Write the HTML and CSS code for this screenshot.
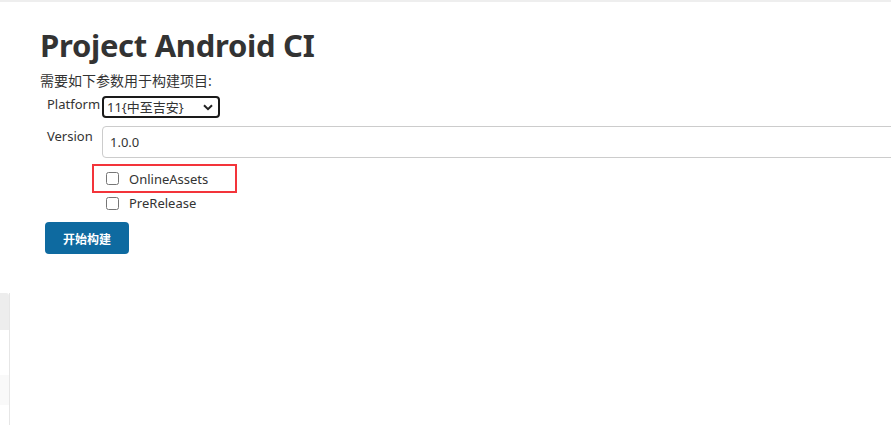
FILE: index.html
```html
<!DOCTYPE html>
<html lang="zh">
<head>
<meta charset="utf-8">
<title>Project Android CI</title>
<link rel="stylesheet" href="styles.css">
</head>
<body>
<div class="topbar"></div>
<main class="page">
  <h1 class="title">Project Android CI</h1>
  <p class="intro">需要如下参数用于构建项目:</p>
  <form class="params">
    <label class="plabel plabel-mid">Platform</label>
    <div class="field field-select">
      <div class="select-wrap">
        <select class="select">
          <option>11{中至吉安}</option>
        </select>
        <svg class="chev" width="10" height="7" viewBox="0 0 10 7"><path d="M1 1.2 L5 5.2 L9 1.2" fill="none" stroke="#222" stroke-width="2"/></svg>
      </div>
    </div>
    <label class="plabel plabel-top">Version</label>
    <div class="field field-text">
      <input class="text" type="text" value="1.0.0">
    </div>
    <div></div>
    <div class="field field-check1">
      <label class="check check-marked"><input type="checkbox"><span>OnlineAssets</span></label>
    </div>
    <div></div>
    <div class="field">
      <label class="check check-plain"><input type="checkbox"><span>PreRelease</span></label>
    </div>
  </form>
  <button class="build" type="button">开始构建</button>
</main>
<div class="sidebar">
  <div class="side-head"></div>
  <div class="side-gap"></div>
  <div class="side-item"></div>
</div>
</body>
</html>
```
FILE: styles.css
```css
html, body {
  margin: 0;
  padding: 0;
  background: #fff;
  overflow: hidden;
}
body {
  font-family: "Noto Sans", "Noto Sans CJK SC", sans-serif;
  color: #333;
  font-size: 13px;
}
.topbar {
  height: 2px;
  background: #eeeeee;
}
.page {
  padding-left: 40px;
}
.title {
  margin: 24px 0 0;
  font-size: 31px;
  line-height: 38px;
  font-weight: 700;
  color: #333;
  letter-spacing: -0.3px;
}
.intro {
  margin: 8px 0 0;
  font-size: 14px;
  line-height: 18px;
  color: #333;
}
.params {
  display: grid;
  grid-template-columns: 55px 1fr;
  padding-left: 7px;
  margin-top: 0;
  row-gap: 0;
}
.plabel {
  font-size: 13px;
  color: #333;
  line-height: 18px;
}
.plabel-mid {
  align-self: center;
}
.plabel-top {
  padding-top: 9px;
}
.field {
  display: flex;
  align-items: center;
}
.field-select {
  margin-top: 6px;
}
.field-text {
  margin-top: 8px;
}
.field-check1 {
  margin-top: 6px;
}
.select-wrap {
  position: relative;
  display: flex;
}
.select {
  appearance: none;
  -webkit-appearance: none;
  width: 118px;
  height: 22px;
  border: 2px solid #1a1a1a;
  border-radius: 4px;
  background: #fff;
  font-family: "Noto Sans", "Noto Sans CJK SC", sans-serif;
  font-size: 13px;
  color: #333;
  padding: 0 0 0 3px;
  line-height: 18px;
}
.chev {
  position: absolute;
  right: 7px;
  top: 8px;
  pointer-events: none;
}
.text {
  width: 820px;
  height: 32px;
  box-sizing: border-box;
  border: 1px solid #cccccc;
  border-radius: 4px;
  padding: 0 7px;
  font-family: "Noto Sans", "Noto Sans CJK SC", sans-serif;
  font-size: 13px;
  color: #333;
}
.check {
  display: flex;
  align-items: center;
  gap: 10px;
  box-sizing: border-box;
  font-size: 13px;
  color: #333;
}
.check input {
  margin: 0;
  width: 13px;
  height: 13px;
}
.check-marked {
  margin-left: -10px;
  width: 145px;
  height: 29px;
  border: 2px solid #f3343a;
  padding-left: 12px;
}
.check-plain {
  height: 20px;
  padding-left: 4px;
}
.build {
  margin: 9px 0 0 5px;
  width: 84px;
  height: 32px;
  border: none;
  border-radius: 4px;
  background: #0e6aa0;
  color: #fff;
  font-family: "Noto Sans CJK SC", sans-serif;
  font-size: 12px;
  font-weight: 700;
}
.sidebar {
  margin-top: 39px;
  width: 9px;
  border-right: 1px solid #e6e6e6;
  height: 140px;
}
.side-head {
  height: 37px;
  background: #ededed;
  border-top-right-radius: 3px;
}
.side-gap {
  height: 45px;
}
.side-item {
  height: 30px;
  background: #f9f9f9;
}
```
